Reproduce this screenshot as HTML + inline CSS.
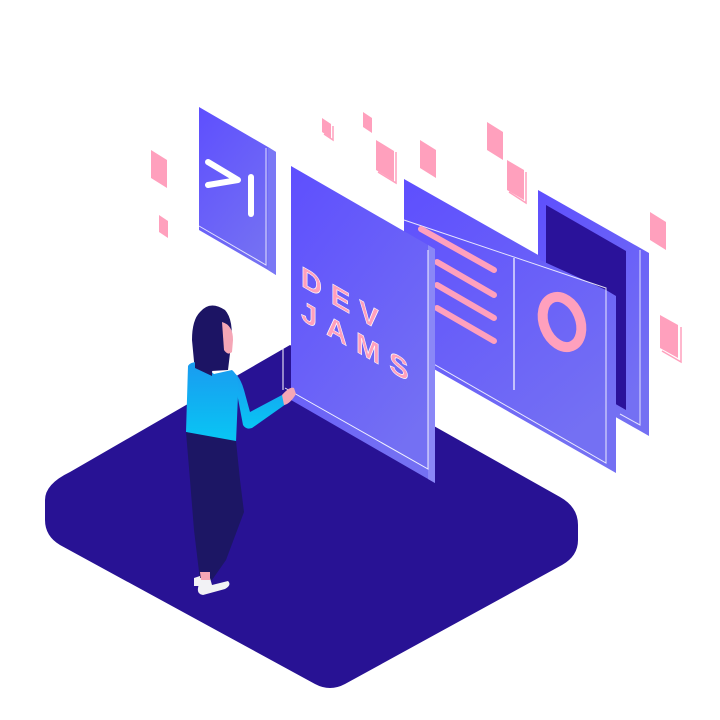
<!DOCTYPE html>
<html><head><meta charset="utf-8"><style>
html,body{margin:0;padding:0;background:#fff;width:720px;height:720px;overflow:hidden}
svg{display:block}
</style></head><body>
<svg width="720" height="720" viewBox="0 0 720 720" xmlns="http://www.w3.org/2000/svg">
<defs>
<linearGradient id="pg" x1="0" y1="0" x2="0.6" y2="1">
<stop offset="0" stop-color="#5e4ffe"/><stop offset="1" stop-color="#7470f3"/></linearGradient>
<linearGradient id="shirt" x1="0" y1="0" x2="0" y2="1">
<stop offset="0" stop-color="#1a9bf0"/><stop offset="1" stop-color="#08c6f4"/></linearGradient>
</defs>
<path d="M70,472 L290,345 L560,497 Q578,507 578,525 L578,540 Q578,556 562,565 L345,684 Q330,692 315,684 L60,545 Q45,536 45,520 L45,500 Q45,484 70,472 Z" fill="#281294"/>

<g fill="#ffa0bd">
<polygon points="151,150 167,160 167,188 151,178"/>
<polygon points="159,215 168,221 168,238 159,232"/>
<polygon points="322,118 331,124 331,138 322,132"/>
<polygon points="363,112 372,118 372,133 363,127"/>
<polygon points="376,140 394,151 394,181 376,170"/>
<polygon points="420,140 436,150 436,178 420,168"/>
<polygon points="487,122 503,132 503,160 487,150"/>
<polygon points="507,160 524,170 524,200 507,190"/>
<polygon points="650,212 666,222 666,250 650,240"/>
<polygon points="660,315 678,325 678,358 660,348"/>
</g>
<g fill="none" stroke="#ffa0bd" stroke-width="1.5">
<polyline points="396,152 396,183 378,172"/>
<polyline points="526,172 526,203 509,192"/>
<polyline points="681,327 681,362 662,351"/>
<polyline points="333,126 333,140 324,134"/>
</g>

<polygon points="199,107 268,147 276,152 276,275 268,270 199,230" fill="url(#pg)"/>
<polygon points="268,147 276,152 276,275 268,270" fill="#7a78f5"/>
<polyline points="199,226 266,265 266,148" fill="none" stroke="#fff" stroke-width="1" opacity="0.8"/>
<polyline points="208,162 238,180 208,185" fill="none" stroke="#fff" stroke-width="6" stroke-linecap="round" stroke-linejoin="round"/>
<line x1="251" y1="177" x2="251" y2="214" stroke="#fff" stroke-width="6" stroke-linecap="round"/>

<polygon points="538,190 649,253 649,436 538,373" fill="url(#pg)"/>
<polygon points="546,205 626,251 626,410 546,364" fill="#2a129a"/>
<polyline points="640,250 640,425 620,414" fill="none" stroke="#fff" stroke-width="1" opacity="0.8"/>

<polygon points="404,179 540,256 540,260 606,290 616,296 616,473 404,352" fill="url(#pg)"/>
<polyline points="404,220 606,288 606,463 404,347" fill="none" stroke="#fff" stroke-width="1" opacity="0.85"/>
<g stroke="#ffa0bd" stroke-width="6" stroke-linecap="round">
<line x1="421" y1="229" x2="494" y2="270"/>
<line x1="437" y1="262" x2="494" y2="295"/>
<line x1="437" y1="285" x2="494" y2="318"/>
<line x1="437" y1="308" x2="494" y2="341"/>
</g>
<line x1="514" y1="258" x2="514" y2="390" stroke="#fff" stroke-width="1.2"/>
<ellipse cx="562" cy="322" rx="18" ry="26" transform="rotate(-22 562 322)" fill="none" stroke="#ffa0bd" stroke-width="10"/>

<polygon points="291,166 428,245 435,249 435,483 291,400" fill="url(#pg)"/>
<polygon points="428,245 435,249 435,483 428,479" fill="#8a87f7"/>
<polyline points="285,388 428,469 428,250" fill="none" stroke="#fff" stroke-width="1" opacity="0.9"/>
<line x1="283" y1="345" x2="283" y2="390" stroke="#fff" stroke-width="1"/>
<g transform="matrix(1,0.577,0,1,0,0)" font-family="Liberation Sans, sans-serif" font-weight="bold" font-size="29" fill="#ffa0bd" stroke="#fff" stroke-width="0.6" letter-spacing="9">
<text x="301" y="112">DEV</text>
<text x="301" y="146">JAMS</text>
</g>

<path d="M200,312 Q210,300 225,310 Q234,320 231,345 L228,370 L195,372 L192,340 Q192,320 200,312 Z" fill="#1c1464"/>
<path d="M222,322 Q233,325 233,340 L232,352 Q228,356 224,350 Z" fill="#f5a6b6"/>
<path d="M233,372 Q240,376 244,390 L250,412 L282,395 L286,404 L252,428 Q246,430 243,425 Z" fill="url(#shirt)"/>
<path d="M188,366 Q190,362 198,362 L214,374 L232,370 Q240,376 238,395 L236,442 L210,438 L186,432 Z" fill="url(#shirt)"/>
<path d="M195,325 L195,368 L212,376 L213,346 Z" fill="#1c1464"/>
<path d="M282,395 Q290,386 294,388 L296,394 Q290,404 284,405 Z" fill="#f5a6b6"/>
<path d="M186,432 L236,441 L240,480 L244,512 L226,560 L212,580 L200,580 L194,530 L190,480 Z" fill="#1c1664"/>
<path d="M200,578 L210,578 L212,585 L228,581 Q232,585 225,589 L203,595 Q197,594 198,588 Z" fill="#f2f2f5"/>
<path d="M200,572 L210,572 L210,580 L201,580 Z" fill="#f5a6b6"/>
<path d="M194,578 L200,576 L200,586 L194,586 Z" fill="#f2f2f5"/>
</svg>
</body></html>
